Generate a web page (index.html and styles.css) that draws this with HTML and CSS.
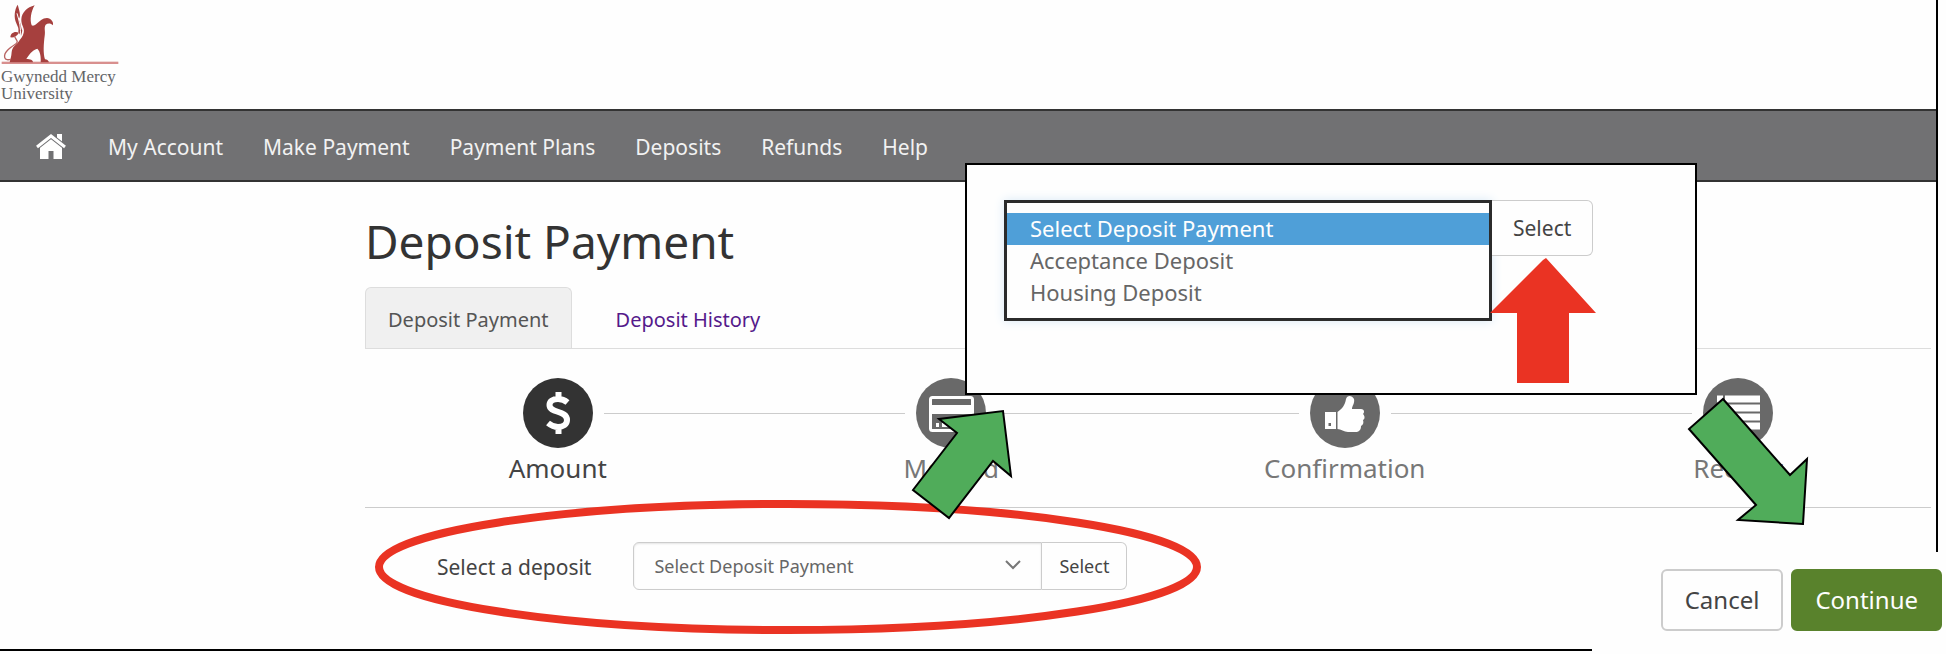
FILE: index.html
```html
<!DOCTYPE html>
<html lang="en">
<head>
<meta charset="utf-8">
<title>Deposit Payment - Gwynedd Mercy University</title>
<link rel="stylesheet" href="styles.css">
</head>
<body>
<div class="screen">
  <header class="brand">
    <svg class="brand-mark" viewBox="0 0 360 192" aria-hidden="true">
      <rect x="2" y="185" width="350" height="7" fill="#d88f8e"/>
      <g fill="#a6403e">
        <path d="M50 14 C40 30 38 52 46 70 C50 80 54 84 52 96 L60 108 L64 92 C58 78 60 68 52 58 C62 50 54 28 50 14Z"/>
        <path d="M101 16 C78 22 62 38 61 58 C60 76 72 84 68 98 C66 110 58 116 52 126 C44 136 34 140 32 156 C31 170 28 178 26 187 L96 187 C96 180 88 177 76 177 C84 164 92 152 109 146 C118 154 120 172 119 187 L144 187 C142 181 138 179 132 178 C126 160 128 130 131 108 C134 92 128 84 134 74 C140 70 148 68 156 76 C158 64 150 56 138 54 C124 54 116 64 106 72 C100 77 96 78 92 76 C86 60 90 34 101 16Z"/>
        <path d="M54 98 C40 92 28 100 28 112 C38 114 48 108 54 98Z"/>
      </g>
      <path d="M40 108 C46 122 54 124 44 132 C26 144 8 156 11 172 C13 181 22 180 30 178" fill="none" stroke="#b86462" stroke-width="4"/>
      <path d="M48 40 C56 66 60 84 58 108" fill="none" stroke="#fff" stroke-width="3"/>
    </svg>
    <div class="brand-name">Gwynedd Mercy<br>University</div>
  </header>

  <nav class="nav" aria-label="Main">
    <a class="nav-home" href="#" aria-label="Home">
      <svg viewBox="0 0 30 25" aria-hidden="true"><path fill="#fff" d="M4 13 L15 4.500 L26 13 V25 H17.500 V17 H12.500 V25 H4Z"/><path fill="#fff" d="M21 0 H26 V8 H21Z"/><path d="M1 13 L15 2 L29 13" fill="none" stroke="#717173" stroke-width="5"/><path d="M1 13 L15 2 L29 13" fill="none" stroke="#fff" stroke-width="3"/></svg>
    </a>
    <a href="#">My Account</a>
    <a href="#">Make Payment</a>
    <a href="#">Payment Plans</a>
    <a href="#">Deposits</a>
    <a href="#">Refunds</a>
    <a href="#">Help</a>
  </nav>

  <main class="content">
    <h1 class="title">Deposit Payment</h1>
    <div class="tabs">
      <a class="tab tab-active" href="#">Deposit Payment</a>
      <a class="tab" href="#">Deposit History</a>
    </div>

    <ol class="steps">
      <li class="step step-current">
        <div class="step-head"><span class="step-icon">
          <svg viewBox="0 0 70 70" aria-hidden="true"><path d="M44.500 24.500 C41 21.500 38 21 35 21 C29.500 21 26.500 23.500 26.500 27 C26.500 35.500 44 32 44 42 C44 46.500 40 49 35 49 C31 49 28 47.500 25 45 M35.500 14 V22 M35.500 48 V56" fill="none" stroke="#fff" stroke-width="6"/></svg>
        </span></div>
        <span>Amount</span>
      </li>
      <li class="step">
        <div class="step-head"><span class="step-icon">
          <svg viewBox="0 0 70 70" aria-hidden="true"><rect x="14.500" y="19.500" width="42" height="33" rx="2" fill="none" stroke="#fff" stroke-width="3"/><path d="M16 27 H55 V36 H16Z M20 45 H23 V49 H20Z M26 45 H35 V49 H26Z" fill="#fff"/></svg>
        </span></div>
        <span>Method</span>
      </li>
      <li class="step">
        <div class="step-head"><span class="step-icon">
          <svg viewBox="0 0 70 70" aria-hidden="true"><path fill="#fff" fill-rule="evenodd" d="M15 34 H26 V51 H15Z M18.500 45 H21 V48 H18.500Z"/><path fill="#fff" d="M27.500 34 C32 31 35 27 36 21 C37 17 42 17 44 21 C45 25 42 28 42 31 H51 C54 31 55 34 53 36 C55 38 55 41 53 42 C54 45 53 47 51 48 C51 52 49 54 45 54 H38 C34 54 31 51 27.500 51Z"/></svg>
        </span></div>
        <span>Confirmation</span>
      </li>
      <li class="step">
        <div class="step-head"><span class="step-icon">
          <svg viewBox="0 0 70 70" aria-hidden="true"><path d="M14 21 H20 M22 21 H57 M14 30 H20 M22 30 H57 M14 39 H20 M22 39 H57 M14 48 H20 M22 48 H57" stroke="#fff" stroke-width="7"/></svg>
        </span></div>
        <span>Receipt</span>
      </li>
    </ol>

    <form class="deposit">
      <label class="deposit-label" for="deposit">Select a deposit</label>
      <div class="group">
        <div class="picker">
          <select class="picker-select" id="deposit">
            <option>Select Deposit Payment</option>
            <option>Acceptance Deposit</option>
            <option>Housing Deposit</option>
          </select>
          <svg class="picker-chevron" viewBox="0 0 16 10" aria-hidden="true"><path d="M1 1 L8 8 L15 1" fill="none" stroke="#777" stroke-width="2"/></svg>
        </div>
        <button class="btn btn-addon" type="button">Select</button>
      </div>
    </form>
  </main>
</div>

<div class="actions">
  <button class="btn btn-large" type="button">Cancel</button>
  <button class="btn btn-large btn-primary" type="button">Continue</button>
</div>

<section class="callout" aria-label="Deposit choices">
  <select class="choices" size="3" aria-label="Deposit choices">
    <option selected>Select Deposit Payment</option>
    <option>Acceptance Deposit</option>
    <option>Housing Deposit</option>
  </select>
  <button class="btn btn-callout" type="button">Select</button>
</section>

<svg class="marks" viewBox="0 0 1946 654" aria-hidden="true">
  <ellipse cx="788" cy="567" rx="409" ry="63" fill="none" stroke="#ea3323" stroke-width="8"/>
  <path d="M1546 258 L1596 313 H1569 V383 H1517 V313 H1490 L1543 260Z" fill="#ea3323"/>
  <g fill="#50ac5a" stroke="#000" stroke-width="2">
    <path d="M1003 411 L1011 476 L993 461 L949 518 L913 490 L957 433 L939 419Z"/>
    <path d="M1803 524 L1738 520 L1756 505 L1689 429 L1723 399 L1790 475 L1807 459Z"/>
  </g>
</svg>
</body>
</html>
```
FILE: styles.css
```css
* { box-sizing: border-box; }

body {
  margin: 0;
  position: relative;
  background: #fefefe;
  color: #333;
  font: 21px/28px "Noto Sans", "Open Sans", sans-serif;
}

a { text-decoration: none; }

.screen {
  margin-right: 8px;
  padding-bottom: 59px;
  border-right: 2px solid #000;
  border-bottom: 2px solid #000;
}

.brand {
  height: 109px;
  padding: 0 1px;
}
.brand-mark { display: block; width: 120px; height: 64px; }
.brand-name {
  padding-top: 4px;
  color: #636467;
  font: 17px/17px "Liberation Serif", serif;
}

.nav {
  display: flex;
  align-items: center;
  gap: 40px;
  height: 73px;
  padding: 2px 36px 0;
  background: #717173;
  border-top: 2px solid #333;
  border-bottom: 2px solid #333;
}
.nav a { color: #f2f2f2; }
.nav .nav-home { padding-right: 2px; }
.nav-home svg { display: block; width: 30px; height: 25px; }

.content { padding: 29px 5px 0 365px; }

.title {
  margin: 0;
  padding-bottom: 16px;
  font-size: 46px;
  line-height: 60px;
  font-weight: 400;
}

.tabs {
  display: flex;
  font-size: 20px;
  border-bottom: 1px solid #ddd;
}
.tab {
  padding: 18px 22px 14px;
  border: 1px solid transparent;
  border-bottom: 0;
  border-radius: 6px 6px 0 0;
  color: #551a8b;
}
.tab-active {
  color: #555;
  background: #f0f0f0;
  border-color: #ddd;
}
.tab + .tab { margin-left: 21px; }

.steps {
  display: grid;
  grid-template-columns: repeat(4, 1fr);
  margin: 0 -4px;
  padding: 29px 0 23px;
  list-style: none;
}
.step {
  display: grid;
  gap: 4px;
  color: #777;
  font-size: 26px;
  line-height: 32px;
  text-align: center;
}
.step-head { display: flex; align-items: center; gap: 11px; }
.step-head::before,
.step-head::after {
  content: "";
  flex: 1;
  height: 1px;
  background: #ccc;
}
.step:first-child .step-head::before,
.step:last-child .step-head::after { background: none; }
.step-icon {
  width: 70px;
  height: 70px;
  border-radius: 50%;
  background: #696969;
}
.step-icon svg { display: block; }
.step-current { color: #444; }
.step-current .step-icon { background: #333; }

.deposit {
  display: flex;
  align-items: center;
  gap: 42px;
  padding: 34px 0 0 72px;
  border-top: 1px solid #ccc;
}
.deposit-label { padding-top: 2px; color: #444; }
.group { display: flex; }
.picker { position: relative; }
.picker-select {
  appearance: none;
  width: 409px;
  height: 48px;
  padding: 0 20px;
  border: 1px solid #ccc;
  border-radius: 6px 0 0 6px;
  background: #fefefe;
  box-shadow: inset 0 1px 2px #e4e4e4;
  color: #666;
  font: inherit;
  font-size: 18px;
}
.picker-chevron {
  position: absolute;
  top: 18px;
  right: 21px;
  width: 16px;
  height: 10px;
  pointer-events: none;
}

.btn {
  border: 1px solid #ccc;
  border-radius: 6px;
  background: #fefefe;
  color: #444;
  font: inherit;
}
.btn-addon {
  height: 48px;
  padding: 0 17px;
  border-left: 0;
  border-radius: 0 6px 6px 0;
  font-size: 18px;
}

/* Action buttons float over the lower right corner of the screen frame. */
.actions {
  position: absolute;
  right: 0;
  top: 552px;
  display: flex;
  gap: 8px;
  padding: 17px 4px 23px 69px;
  background: #fefefe;
}
.btn-large {
  height: 62px;
  padding: 0 22px;
  border-width: 2px;
  font-size: 24px;
}
.btn-primary {
  border-color: #59822c;
  background: #59822c;
  color: #fefefe;
}

/* Enlarged view of the open deposit list. */
.callout {
  position: absolute;
  left: 965px;
  top: 163px;
  display: flex;
  align-items: flex-start;
  padding: 35px 102px 72px 37px;
  border: 2px solid #000;
  background: #fefefe;
}
.choices {
  width: 488px;
  height: 121px;
  padding: 10px 0;
  overflow: hidden;
  border: 3px solid #2b2b2b;
  border-radius: 0;
  outline: 0;
  background: #fefefe;
  box-shadow: 0 0 10px #d8e9f6;
  color: #666;
  font: inherit;
  font-size: 22px;
}
.choices option {
  min-height: 32px;
  padding: 0 23px;
  line-height: 32px;
}
.choices option:checked {
  background: #4f9fd8 linear-gradient(#4f9fd8, #4f9fd8);
  color: #fefefe;
  -webkit-text-fill-color: #fefefe;
}
.btn-callout {
  height: 56px;
  padding: 0 21px;
  border-left: 0;
  border-radius: 0 6px 6px 0;
}

.marks {
  position: absolute;
  left: 0;
  top: 0;
  width: 1946px;
  height: 654px;
  pointer-events: none;
}
```
